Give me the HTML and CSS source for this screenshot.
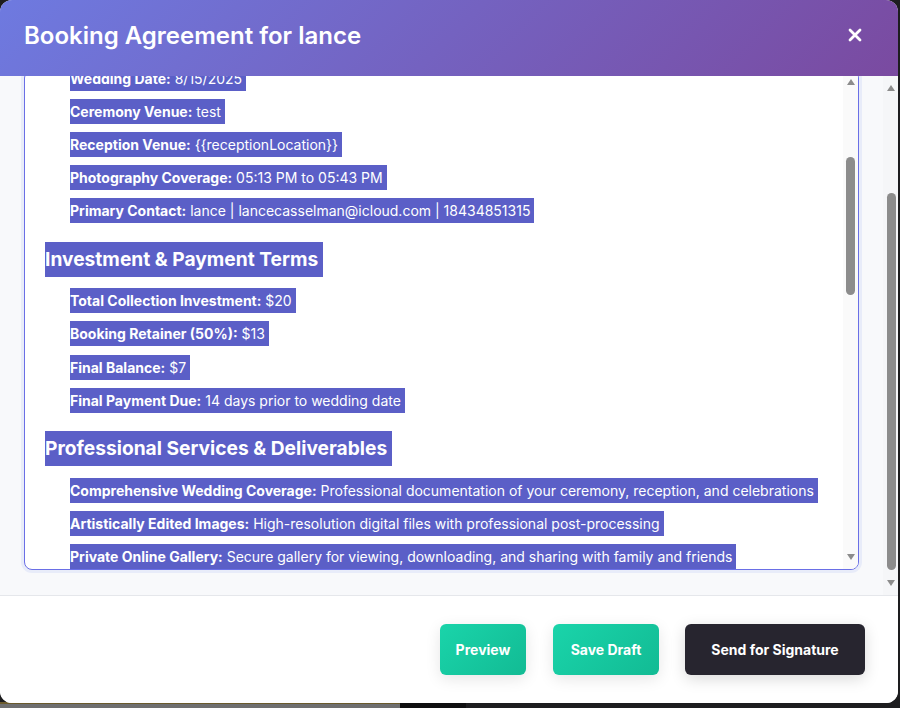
FILE: index.html
```html
<!DOCTYPE html>
<html lang="en">
<head>
<meta charset="utf-8">
<title>Booking Agreement</title>
<link rel="stylesheet" href="styles.css">
</head>
<body>
<div class="backdrop">
  <div class="bg-card"></div>
  <div class="bg-dark"></div>
</div>
<div class="modal">
  <header class="modal-header">
    <h2 class="modal-title">Booking Agreement for lance</h2>
    <button class="close-btn" aria-label="Close">
      <svg width="14" height="14" viewBox="0 0 14 14"><path d="M2 2 L12 12 M12 2 L2 12" stroke="#fff" stroke-width="2.8" stroke-linecap="round"/></svg>
    </button>
  </header>
  <div class="modal-body">
    <div class="body-viewport" id="bodyViewport">
      <div class="field">
        <label class="field-label">Contract Template</label>
        <div class="field-select">Standard Wedding Photography Agreement</div>
      </div>
      <label class="field-label">Contract Content</label>
      <div class="editor">
        <div class="editor-content" id="editor" contenteditable="true">
          <h2 class="doc-title">Wedding Photography Booking Agreement</h2>
          <p>This agreement is entered into between the photographer and lance for professional wedding photography services. Please review all terms carefully before signing to confirm your booking and reserve your date.</p>
          <h3>Event Details</h3>
          <ul>
            <li><strong>Client Name:</strong> lance</li>
            <li id="anchor"><strong>Wedding Date:</strong> 8/15/2025</li>
            <li><strong>Ceremony Venue:</strong> test</li>
            <li><strong>Reception Venue:</strong> {{receptionLocation}}</li>
            <li><strong>Photography Coverage:</strong> 05:13 PM to 05:43 PM</li>
            <li><strong>Primary Contact:</strong> lance | lancecasselman@icloud.com | 18434851315</li>
          </ul>
          <h3>Investment &amp; Payment Terms</h3>
          <ul>
            <li><strong>Total Collection Investment:</strong> $20</li>
            <li><strong>Booking Retainer (50%):</strong> $13</li>
            <li><strong>Final Balance:</strong> $7</li>
            <li><strong>Final Payment Due:</strong> 14 days prior to wedding date</li>
          </ul>
          <h3>Professional Services &amp; Deliverables</h3>
          <ul>
            <li><strong>Comprehensive Wedding Coverage:</strong> Professional documentation of your ceremony, reception, and celebrations</li>
            <li><strong>Artistically Edited Images:</strong> High-resolution digital files with professional post-processing</li>
            <li><strong>Private Online Gallery:</strong> Secure gallery for viewing, downloading, and sharing with family and friends</li>
            <li><strong>Print Release:</strong> Personal printing rights for all delivered images</li>
            <li><strong>Delivery Timeline:</strong> Final gallery delivered within 6-8 weeks</li>
          </ul>
          <h3>Booking &amp; Cancellation Policy</h3>
          <ul>
            <li><strong>Retainer:</strong> Non-refundable and required to reserve your date</li>
            <li><strong>Rescheduling:</strong> Subject to photographer availability</li>
            <li><strong>Cancellation:</strong> Must be submitted in writing</li>
            <li><strong>Late Payment:</strong> May result in forfeiture of services</li>
          </ul>
          <h3>Image Usage &amp; Copyright</h3>
          <ul>
            <li><strong>Copyright:</strong> Retained by the photographer</li>
            <li><strong>Portfolio Use:</strong> Images may be used for promotion</li>
            <li><strong>Personal Use:</strong> Client may share and print images</li>
          </ul>
          <h3>Limitation of Liability</h3>
          <p>In the unlikely event of equipment failure, illness, or circumstances beyond control, liability is limited to a full refund of all payments received for services not rendered.</p>
          <h3>Agreement</h3>
          <p>By signing below, both parties agree to the terms and conditions outlined in this booking agreement.</p>
        </div>
        <div class="scrollbar editor-scrollbar">
          <span class="sb-arrow sb-up"></span>
          <span class="sb-thumb editor-thumb"></span>
          <span class="sb-fill"></span>
          <span class="sb-arrow sb-down"></span>
        </div>
      </div>
    </div>
    <div class="scrollbar body-scrollbar">
      <span class="sb-arrow sb-up"></span>
      <span class="sb-thumb body-thumb"></span>
      <span class="sb-fill"></span>
      <span class="sb-arrow sb-down"></span>
    </div>
  </div>
  <footer class="modal-footer">
    <button class="btn btn-green btn-preview">Preview</button>
    <button class="btn btn-green btn-draft">Save Draft</button>
    <button class="btn btn-dark">Send for Signature</button>
  </footer>
</div>
<script src="script.js"></script>
</body>
</html>
```
FILE: styles.css
```css
* { box-sizing: border-box; }
html, body { margin: 0; padding: 0; }
body {
  width: 900px;
  height: 708px;
  overflow: hidden;
  background: #1d1d1f;
  font-family: Inter, "Noto Sans", sans-serif;
  position: relative;
}
.backdrop {
  position: absolute;
  left: 0; top: 0; right: 0; bottom: 0;
  display: flex;
  align-items: flex-end;
}
.bg-card {
  width: 400px;
  height: 6px;
  background: #6f6f6f;
  border-top: 2px solid #6a5a2c;
}
.bg-dark {
  width: 66px;
  height: 6px;
  background: #0f0f10;
}
.modal {
  position: relative;
  width: 898px;
  height: 703px;
  background: #fff;
  border-radius: 12px;
  overflow: hidden;
  display: flex;
  flex-direction: column;
}
.modal-header {
  height: 76px;
  flex: none;
  display: flex;
  align-items: center;
  justify-content: space-between;
  padding: 0 24px;
  background: linear-gradient(135deg, #6e7ae0 0%, #7a4aa0 100%);
}
.modal-title {
  margin: 0;
  color: #fff;
  font-size: 24px;
  font-weight: 600;
  line-height: 36px;
  padding-bottom: 4px;
}
.close-btn {
  background: none;
  border: 0;
  padding: 0;
  width: 30px;
  height: 30px;
  display: flex;
  align-items: center;
  justify-content: center;
  margin-right: 4px;
  margin-top: -6px;
  cursor: pointer;
}
.modal-body {
  flex: 1;
  min-height: 0;
  display: flex;
  background: #f8f9fb;
}
.body-viewport {
  flex: 1;
  overflow: hidden;
  padding: 24px 24px 25px 24px;
}
.field { margin-bottom: 16px; }
.field-label {
  display: block;
  font-size: 14px;
  font-weight: 600;
  color: #333;
  line-height: 20px;
  margin-bottom: 8px;
}
.field-select {
  height: 46px;
  border: 1px solid #ddd;
  border-radius: 8px;
  background: #fff;
  padding: 12px 14px;
  font-size: 14px;
  color: #333;
}
.editor {
  height: 500px;
  display: flex;
  background: #fff;
  border: 1px solid #6a6fe6;
  border-radius: 8px;
  overflow: hidden;
  box-shadow: 0 0 0 3px rgba(102,126,234,0.1);
}
.editor-content {
  flex: 1;
  overflow: hidden;
  padding: 20px;
  font-size: 14px;
  line-height: 1.8;
  color: #333;
  outline: none;
}
.editor-content ::selection { background: #5b5fc7; color: #fff; }
.editor-content::selection { background: #5b5fc7; color: #fff; }
.editor-content .doc-title {
  font-size: 22px;
  margin: 0 0 12px;
}
.editor-content p { margin: 0 0 12px; }
.editor-content h3 {
  font-size: 19.2px;
  font-weight: 700;
  line-height: 1.8;
  margin: 18px 0 12px;
}
.editor-content ul {
  list-style: none;
  margin: 0;
  padding: 0 0 0 25px;
}
.editor-content li { margin: 0 0 8px; }
.editor-content strong { font-weight: 700; }

.scrollbar {
  width: 15px;
  flex: none;
  display: flex;
  flex-direction: column;
  align-items: center;
}
.editor-scrollbar {
  background: #fafafa;
  padding: 8px 0 9px;
}
.body-scrollbar {
  background: #f5f6f8;
  padding: 9px 0 9px 1px;
}
.sb-arrow {
  width: 0;
  height: 0;
  flex: none;
  border-left: 4.5px solid transparent;
  border-right: 4.5px solid transparent;
}
.sb-up { border-bottom: 6px solid #8c8c8c; }
.sb-down { border-top: 6px solid #8c8c8c; }
.sb-thumb {
  width: 9px;
  flex: none;
  background: #8c8c8c;
  border-radius: 5px;
}
.sb-fill { flex: 1; }
.editor-thumb { margin-top: 72px; height: 138px; }
.body-thumb { margin-top: 102px; height: 377px; }
.body-scrollbar .sb-fill { flex: 0 0 10px; }

.modal-footer {
  flex: none;
  height: 108px;
  border-top: 1px solid #e5e7eb;
  background: #fff;
  display: flex;
  justify-content: flex-end;
  align-items: flex-start;
  gap: 26px;
  padding: 28px 33px 0 0;
}
.btn {
  height: 51px;
  border: 0;
  border-radius: 6px;
  font-family: Inter, "Noto Sans", sans-serif;
  font-size: 14px;
  font-weight: 700;
  color: #fff;
  cursor: pointer;
  box-shadow: 0 4px 15px rgba(0,0,0,0.1);
}
.btn-green {
  background: linear-gradient(135deg, #1ad4aa 0%, #12bb94 100%);
}
.btn-preview { width: 86px; padding: 0; margin-right: 1px; }
.btn-draft { width: 106px; padding: 0; }
.btn-dark {
  width: 180px;
  padding: 0;
  background: #27252f;
  box-shadow: 0 4px 15px rgba(0,0,0,0.15);
}
```
FILE: script.js
```js
(function () {
  var viewport = document.getElementById('bodyViewport');
  var editor = document.getElementById('editor');
  viewport.scrollTop = viewport.scrollHeight;
  var anchor = document.getElementById('anchor');
  editor.scrollTop += anchor.getBoundingClientRect().top - 66;
  var range = document.createRange();
  range.selectNodeContents(editor);
  var sel = window.getSelection();
  sel.removeAllRanges();
  sel.addRange(range);
})();
```
